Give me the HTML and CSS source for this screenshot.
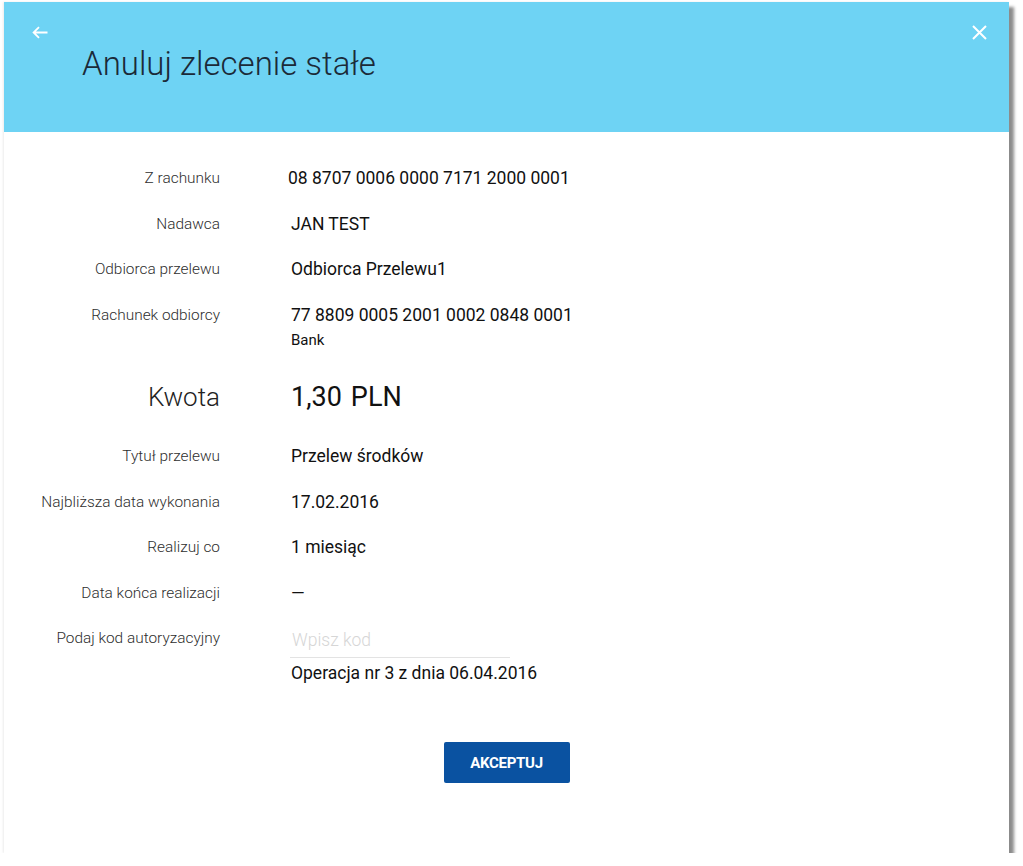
FILE: index.html
```html
<!DOCTYPE html>
<html lang="pl">
<head>
<meta charset="utf-8">
<title>Anuluj zlecenie stałe</title>
<link rel="stylesheet" href="styles.css">
</head>
<body>
<div class="page">
  <div class="dialog">
    <header class="dialog-header">
      <div class="header-bar">
        <button class="icon-btn back" aria-label="Wstecz">
          <svg width="16" height="13" viewBox="0 0 16 13"><path d="M15.5 6.5H1.8M7 1.2L1.6 6.5 7 11.8" fill="none" stroke="#fff" stroke-width="1.8"/></svg>
        </button>
        <button class="icon-btn close" aria-label="Zamknij">
          <svg width="15" height="15" viewBox="0 0 15 15"><path d="M1 1L14 14M14 1L1 14" fill="none" stroke="#fff" stroke-width="2"/></svg>
        </button>
      </div>
      <h1 class="title">Anuluj zlecenie stałe</h1>
    </header>

    <main class="dialog-body">
      <div class="rows">
        <div class="row">
          <div class="label">Z rachunku</div>
          <div class="value value-account">08 8707 0006 0000 7171 2000 0001</div>
        </div>
        <div class="row">
          <div class="label">Nadawca</div>
          <div class="value">JAN TEST</div>
        </div>
        <div class="row">
          <div class="label">Odbiorca przelewu</div>
          <div class="value">Odbiorca Przelewu1</div>
        </div>
        <div class="row">
          <div class="label">Rachunek odbiorcy</div>
          <div class="value">
            <div>77 8809 0005 2001 0002 0848 0001</div>
            <div class="sub">Bank</div>
          </div>
        </div>
        <div class="row row-amount">
          <div class="label">Kwota</div>
          <div class="value"><span class="amount">1,30</span><span class="currency">PLN</span></div>
        </div>
        <div class="row row-after-amount">
          <div class="label">Tytuł przelewu</div>
          <div class="value">Przelew środków</div>
        </div>
        <div class="row">
          <div class="label">Najbliższa data wykonania</div>
          <div class="value">17.02.2016</div>
        </div>
        <div class="row">
          <div class="label">Realizuj co</div>
          <div class="value">1 miesiąc</div>
        </div>
        <div class="row">
          <div class="label">Data końca realizacji</div>
          <div class="value">—</div>
        </div>
        <div class="row row-code">
          <div class="label">Podaj kod autoryzacyjny</div>
          <div class="value">
            <input class="code-input" type="text" placeholder="Wpisz kod">
            <div class="operation">Operacja nr 3 z dnia 06.04.2016</div>
          </div>
        </div>
      </div>
      <div class="actions">
        <button class="btn-primary">AKCEPTUJ</button>
      </div>
    </main>
  </div>
</div>
</body>
</html>
```

FILE: styles.css
```css
* { box-sizing: border-box; }

html, body {
  margin: 0;
  background: #ffffff;
}

body {
  font-family: Roboto, "Liberation Sans", Arial, sans-serif;
  color: #111;
}

.page {
  padding: 2px 0 0 4px;
}

.dialog {
  width: 1005px;
  height: 851px;
  background: #fff;
  box-shadow: 5px 5px 3px rgba(0, 0, 0, 0.45), -1px 0 2px rgba(0, 0, 0, 0.08);
  display: flex;
  flex-direction: column;
}

.dialog-header {
  height: 130px;
  background: #6ed3f4;
  padding: 23px 22px 0 28px;
}

.header-bar {
  height: 14px;
  display: flex;
  justify-content: space-between;
  align-items: center;
}

.icon-btn {
  background: none;
  border: 0;
  padding: 0;
  margin: 0;
  display: flex;
  align-items: center;
  justify-content: center;
  cursor: pointer;
}

.icon-btn.back { margin-top: 1px; }

.title {
  margin: 5px 0 0 50px;
  font-size: 33px;
  line-height: 40px;
  font-weight: 300;
  color: #1b2a38;
}

.dialog-body {
  flex: 1;
  padding-top: 35px;
}

.rows {
  display: flex;
  flex-direction: column;
  gap: 23.5px;
}

.row {
  display: grid;
  grid-template-columns: 216px 1fr;
  column-gap: 71px;
  align-items: start;
}

.label {
  text-align: right;
  font-size: 15.4px;
  line-height: 22px;
  font-weight: 300;
  color: #2e2e2e;
}

.value {
  font-size: 17.5px;
  line-height: 22px;
  color: #111;
}

.value-account { margin-left: -3px; }

.sub {
  font-size: 15px;
  line-height: 24px;
  margin-top: 2px;
}

.row-amount { margin-top: 6px; }
.row-amount .label {
  font-size: 26px;
  line-height: 32px;
  color: #222;
}
.row-amount .value {
  font-size: 27px;
  line-height: 32px;
  display: flex;
  gap: 9px;
}

.row-after-amount { margin-top: 8.5px; }

.code-input {
  display: block;
  width: 220px;
  height: 31px;
  margin-left: -1px;
  padding: 2px 0 6px 2px;
  border: 0;
  border-bottom: 1px solid #e3e3e3;
  font-family: inherit;
  font-size: 17.5px;
  font-weight: 300;
  color: #111;
  outline: none;
  background: transparent;
}

.code-input::placeholder {
  color: #d6d6d6;
}

.operation {
  margin-top: 4px;
  line-height: 22px;
}

.actions {
  display: flex;
  justify-content: center;
  margin-top: 58px;
}

.btn-primary {
  width: 126px;
  height: 41px;
  background: #0a52a1;
  border: 0;
  border-radius: 2px;
  color: #fff;
  font-family: inherit;
  font-size: 15px;
  font-weight: 700;
  letter-spacing: -0.3px;
  cursor: pointer;
}
```
